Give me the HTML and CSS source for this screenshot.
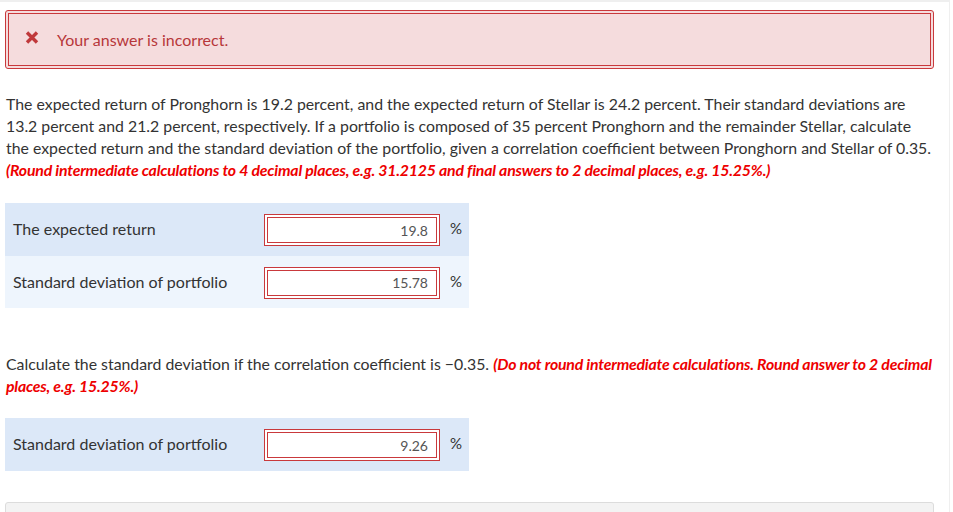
FILE: index.html
```html
<!DOCTYPE html>
<html>
<head>
<meta charset="utf-8">
<link rel="stylesheet" href="styles.css">
</head>
<body>
<div class="page">
  <div class="alert">
    <div class="alert-inner">
      <svg class="x-icon" width="14" height="13" viewBox="0 0 14 13"><path d="M2 1.5 L12 11.5 M12 1.5 L2 11.5" stroke="#c0393b" stroke-width="3.4" stroke-linecap="butt"/></svg>
      <span class="alert-text">Your answer is incorrect.</span>
    </div>
  </div>

  <p class="question">The expected return of Pronghorn is 19.2 percent, and the expected return of Stellar is 24.2 percent. Their standard deviations are 13.2 percent and 21.2 percent, respectively. If a portfolio is composed of 35 percent Pronghorn and the remainder Stellar, calculate the expected return and the standard deviation of the portfolio, given a correlation coefficient between Pronghorn and Stellar of 0.35. <em class="hint">(Round intermediate calculations to 4 decimal places, e.g. 31.2125 and final answers to 2 decimal places, e.g. 15.25%.)</em></p>

  <div class="table">
    <div class="row dark">
      <span class="label">The expected return</span>
      <span class="field"><span class="field-inner">19.8</span></span>
      <span class="unit">%</span>
    </div>
    <div class="row light">
      <span class="label">Standard deviation of portfolio</span>
      <span class="field"><span class="field-inner">15.78</span></span>
      <span class="unit">%</span>
    </div>
  </div>

  <p class="question q2">Calculate the standard deviation if the correlation coefficient is −0.35. <em class="hint">(Do not round intermediate calculations. Round answer to 2 decimal places, e.g. 15.25%.)</em></p>

  <div class="table t2">
    <div class="row dark">
      <span class="label">Standard deviation of portfolio</span>
      <span class="field"><span class="field-inner">9.26</span></span>
      <span class="unit">%</span>
    </div>
  </div>

  <div class="footer-box"></div>
</div>
</body>
</html>
```
FILE: styles.css
```css
html, body {
  margin: 0;
  padding: 0;
  background: #fff;
}
body {
  font-family: Lato, "Open Sans", sans-serif;
  color: #333;
  overflow: hidden;
  height: 512px;
}
.page {
  width: 950px;
  height: 512px;
  overflow: hidden;
  border-top: 2px solid #efefef;
  border-right: 1px solid #efefef;
  padding: 8px 15px 0 5px;
  box-sizing: border-box;
}
.alert {
  border: 1px solid #c9393c;
  border-radius: 3px;
  padding: 2px;
  background: #f5dcdd;
}
.alert-inner {
  border: 1px solid #c9393c;
  height: 53px;
  display: flex;
  align-items: center;
  padding-left: 16px;
  box-sizing: border-box;
}
.x-icon {
  margin-right: 18px;
  margin-top: -4px;
}
.alert-text {
  font-size: 16px;
  color: #b7373a;
  margin-top: -1px;
}
.question {
  margin: 24px 0 0 1px;
  font-size: 15.85px;
  line-height: 22px;
  color: #333;
}
.hint {
  color: #ee0000;
  font-weight: bold;
  font-style: italic;
  letter-spacing: -0.2px;
}
.table {
  width: 464px;
  margin-top: 22px;
}
.row {
  display: flex;
  align-items: center;
  height: 53px;
}
.row.light {
  height: 52px;
}
.dark { background: #dce8f8; }
.light { background: #eef5fd; }
.label {
  width: 251px;
  padding-left: 8px;
  font-size: 16px;
  color: #333;
  margin-top: -2px;
}
.field {
  width: 176px;
  height: 32px;
  box-sizing: border-box;
  border: 1px solid #c9393c;
  padding: 2px;
  background: #fff;
  margin-top: 1px;
}
.field-inner {
  display: flex;
  justify-content: flex-end;
  align-items: center;
  height: 100%;
  box-sizing: border-box;
  border: 1px solid #c9393c;
  padding-right: 8px;
  font-size: 14px;
  color: #555;
}
.unit {
  margin-left: 10px;
  font-size: 15px;
  color: #333;
  margin-top: -3px;
}
.q2 {
  margin-top: 45px;
}
.t2 {
  margin-top: 21px;
}
.footer-box {
  margin-top: 31px;
  height: 40px;
  border: 1px solid #dcdcdc;
  border-radius: 3px;
  background: #f3f3f3;
}
```
